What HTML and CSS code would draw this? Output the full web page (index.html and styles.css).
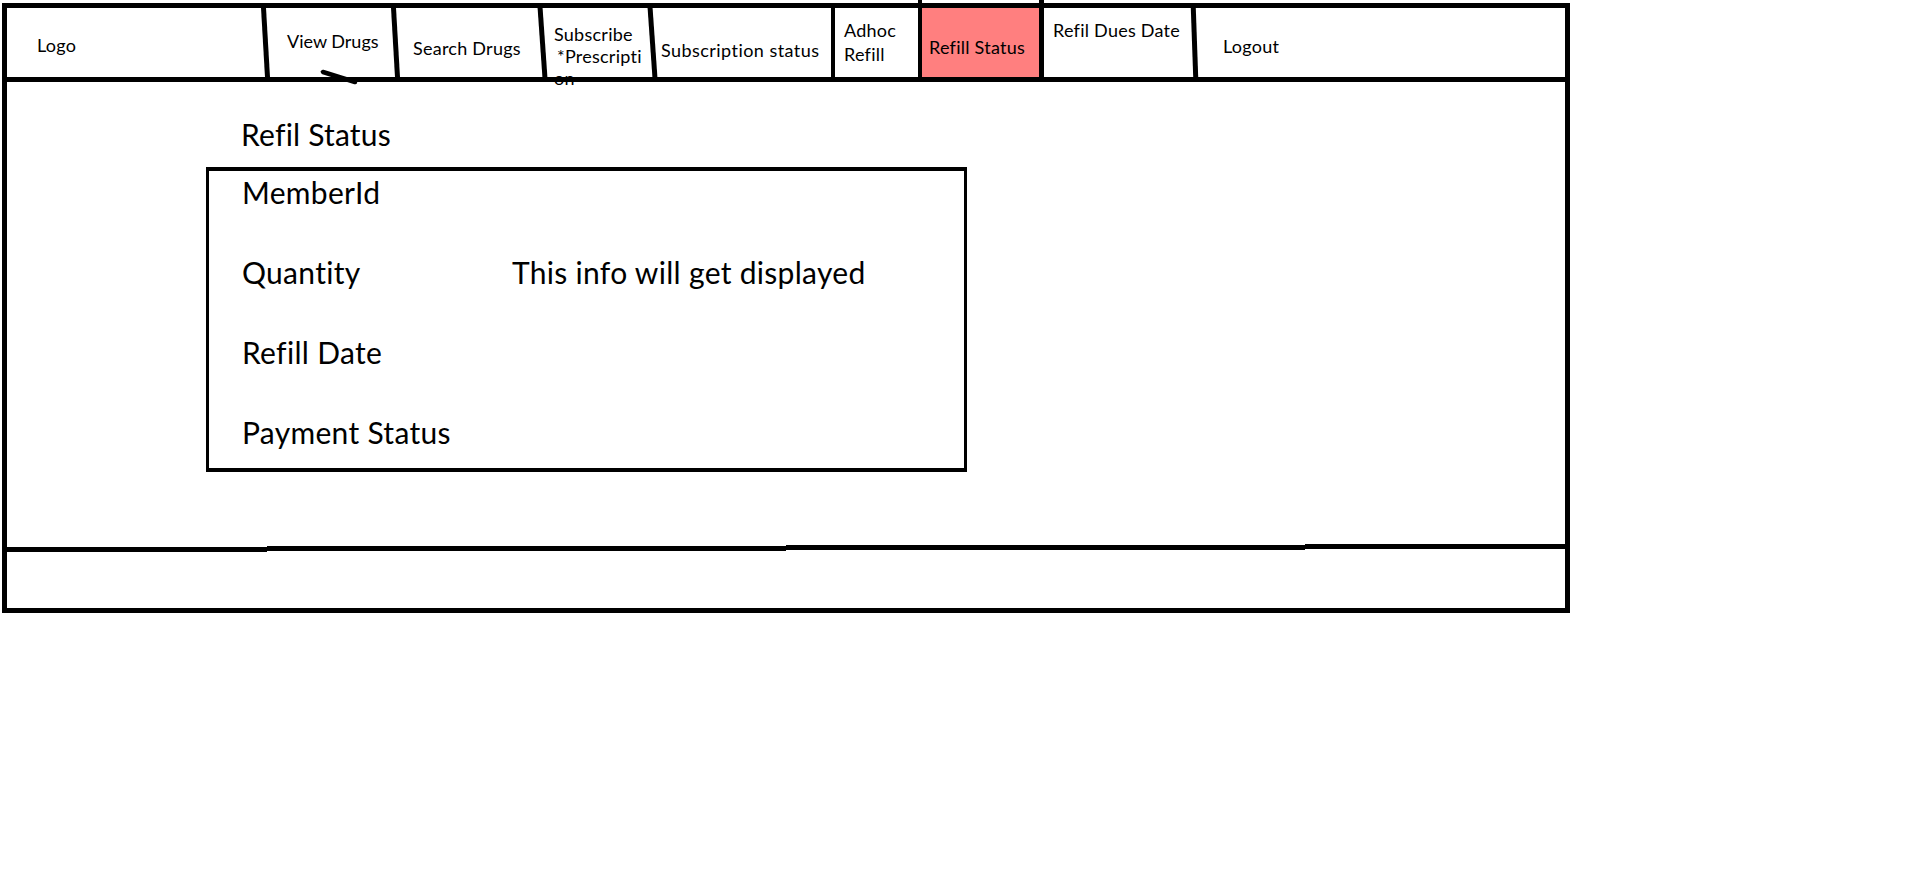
FILE: index.html
```html
<!DOCTYPE html>
<html lang="en">
<head>
<meta charset="utf-8">
<title>Refill Status</title>
<link rel="stylesheet" href="styles.css">
</head>
<body>
<div class="frame">
  <nav class="nav">
    <div class="cell cell-logo">Logo</div>
    <div class="sep sep-s1"></div>
    <div class="cell cell-view">View Drugs<svg class="scribble" width="42" height="20" viewBox="0 0 42 20"><line x1="5" y1="5" x2="37" y2="15" stroke="#000" stroke-width="4.5" stroke-linecap="round"/></svg></div>
    <div class="sep sep-s1"></div>
    <div class="cell cell-search">Search Drugs</div>
    <div class="sep sep-s2"></div>
    <div class="cell cell-subscribe"><span class="line">Subscribe</span><span class="line indent">*Prescripti</span><span class="line">on</span></div>
    <div class="sep sep-s2"></div>
    <div class="cell cell-substatus">Subscription status</div>
    <div class="sep sep-thin"></div>
    <div class="cell cell-adhoc">Adhoc<br>Refill</div>
    <div class="sep sep-thin sep-tall"></div>
    <div class="cell cell-active">Refill Status</div>
    <div class="sep sep-tall"></div>
    <div class="cell cell-dues">Refil Dues Date</div>
    <div class="sep sep-s3"></div>
    <div class="cell cell-logout">Logout</div>
  </nav>
  <div class="rule"></div>
  <main class="main">
    <h1 class="title">Refil Status</h1>
    <div class="card">
      <div class="row"><span class="label">MemberId</span></div>
      <div class="row"><span class="label">Quantity</span><span class="info">This info will get displayed</span></div>
      <div class="row"><span class="label">Refill Date</span></div>
      <div class="row"><span class="label">Payment Status</span></div>
    </div>
  </main>
  <div class="divider"><span class="seg seg1"></span><span class="seg seg2"></span><span class="seg seg3"></span><span class="seg seg4"></span></div>
  <footer class="footer"></footer>
</div>
</body>
</html>
```
FILE: styles.css
```css
* { box-sizing: border-box; }
html, body { margin: 0; padding: 0; background: #fff; }
body {
  font-family: Lato, "Open Sans", sans-serif;
  color: #000;
  font-variant-ligatures: none;
  font-feature-settings: "liga" 0, "clig" 0;
}

.frame {
  margin: 3px 0 0 2px;
  width: 1568px;
  border: 5px solid #000;
  display: flex;
  flex-direction: column;
}

.nav { display: flex; height: 69px; font-size: 18px; line-height: 24px; letter-spacing: 0.25px; }
.cell { flex: none; white-space: nowrap; position: relative; }
.cell-logo { width: 256px; padding: 25px 0 0 30px; }
.cell-view { width: 125px; padding: 21px 0 0 19px; letter-spacing: 0; }
.cell-search { width: 142px; padding: 28px 0 0 15px; }
.cell-subscribe { width: 105px; padding: 15px 0 0 9px; line-height: 22px; }
.cell-subscribe .line { display: block; }
.cell-subscribe .indent { padding-left: 3px; }
.cell-substatus { width: 176px; padding: 30px 0 0 6px; letter-spacing: 0.45px; }
.cell-adhoc { width: 83px; padding: 10px 0 0 9px; }
.cell-active { width: 117px; padding: 27px 0 0 7px; background: #ff7f7f; }
.cell-dues { width: 148px; padding: 10px 0 0 9px; }
.cell-logout { flex: 1; padding: 26px 0 0 26px; }

.sep { flex: none; width: 5px; background: #000; margin: -3px 0; }
.sep-s1 { transform: skewX(3.3deg); }
.sep-s2 { transform: skewX(4deg); }
.sep-s3 { transform: skewX(2deg); }
.sep-thin { width: 4px; }
.sep-tall { margin-top: -8px; }

.scribble { position: absolute; left: 50px; top: 59px; overflow: visible; }

.rule { height: 5px; background: #000; position: relative; }

.main { height: 462px; padding-top: 32px; }
.title { margin: 0 0 13px 234px; font-size: 30px; line-height: 40px; font-weight: 400; letter-spacing: 0.2px; }
.card {
  margin-left: 199px;
  width: 761px;
  border-style: solid;
  border-color: #000;
  border-width: 4px 3px;
  padding: 1px 0 16px 33px;
  display: flex;
  flex-direction: column;
  gap: 40px;
  font-size: 30px;
  line-height: 40px;
  letter-spacing: 0.3px;
}
.row { display: grid; grid-template-columns: 270px auto; height: 40px; white-space: nowrap; }

.divider { display: flex; height: 8px; }
.seg { flex: none; height: 5px; background: #000; }
.seg1 { width: 260px; margin-top: 3px; }
.seg2 { width: 519px; margin-top: 2px; }
.seg3 { width: 519px; margin-top: 1px; }
.seg4 { flex: 1; margin-top: 0; }

.footer { height: 56px; }
```
